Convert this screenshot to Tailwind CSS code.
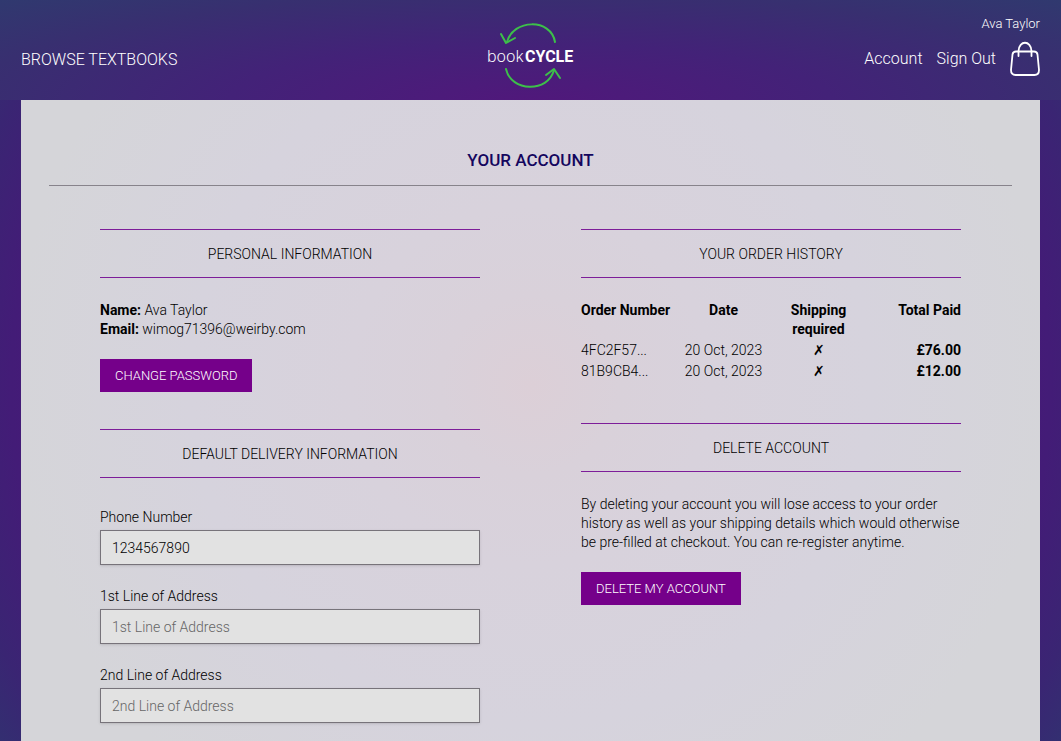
<!DOCTYPE html>
<html lang="en">
<head>
<meta charset="utf-8">
<meta name="viewport" content="width=device-width, initial-scale=1">
<title>Your Account – bookCYCLE</title>
<script src="https://cdn.jsdelivr.net/npm/@tailwindcss/browser@4"></script>
</head>
<body class="min-h-screen overflow-x-hidden bg-[radial-gradient(circle_at_50%_385px,#58107c_290px,#431c77_520px,#3a2573_590px,#303370_660px)] font-[Roboto,'Noto_Sans',sans-serif] text-sm leading-[19px] font-light text-black">
<header class="grid h-25 grid-cols-3 bg-[radial-gradient(ellipse_at_50%_100%,#50187b_0%,#432278_40%,#382f70_75%,#30396f_100%)] px-[21px] text-white">
  <nav class="flex items-center pt-5" aria-label="Browse">
    <a href="#" class="text-base">BROWSE TEXTBOOKS</a>
  </nav>
  <a href="#" class="flex justify-center pt-[21px]" aria-label="bookCYCLE home">
    <svg class="overflow-visible" width="88" height="68" viewBox="0 0 88 68" aria-hidden="true">
      <g fill="none" stroke="#3dc04a" stroke-width="2" stroke-linecap="round" stroke-linejoin="round">
        <path d="M21 21C27 -2 65 -3 69 21"/>
        <path d="M15 13L20 22L29 17"/>
        <path d="M20 48C25 71 62 72 68 49"/>
        <path d="M60 54L68 48L74 57"/>
      </g>
      <text x="1" y="41" font-family="Noto Sans" font-size="16" font-weight="300" fill="#fff">book</text>
      <text x="39" y="41" font-family="Roboto" font-size="16" font-weight="700" fill="#fff">CYCLE</text>
    </svg>
  </a>
  <div class="flex flex-col items-end pt-3.5">
    <span class="text-[13px] leading-[19px]">Ava Taylor</span>
    <nav class="mt-2 flex items-center gap-3.5 text-base" aria-label="Account">
      <a href="#">Account</a>
      <a href="#">Sign Out</a>
      <a href="#" aria-label="Shopping bag">
        <svg width="30" height="36" viewBox="0 0 30 36" fill="none" stroke="#fff" stroke-width="1.8" stroke-linecap="round" aria-hidden="true">
          <path d="M6 10.500H24Q27 10.500 27.500 13.500L29 29Q29 34 24.500 34H5.500Q1 34 1 29L2.500 13.500Q3 10.500 6 10.500Z"/>
          <path d="M8.500 15V10C9 -1 21 -1 21.500 10V15"/>
        </svg>
      </a>
    </nav>
  </div>
</header>
<main class="mx-[21px] min-h-[calc(100vh-100px)] bg-[radial-gradient(circle_at_50%_285px,#dccfd7_0px,#d9d1da_90px,#d8d2dc_180px,#d6d3dd_340px,#d5d5d9_520px)] px-7 pt-[49px] pb-3">
  <h1 class="border-b border-[#87838b] pb-3.5 text-center text-[17px] leading-[22px] font-medium text-[#14065e]">YOUR ACCOUNT</h1>
  <div class="mt-[43px] grid grid-cols-2 gap-[101px] px-[51px]">
    <div>
      <section>
        <h2 class="border-y border-[#7d1d99] pt-[15px] pb-[13px] text-center">PERSONAL INFORMATION</h2>
        <p class="mt-[23px]"><b class="font-bold">Name:</b> Ava Taylor</p>
        <p><b class="font-bold">Email:</b> wimog71396@weirby.com</p>
        <button class="mt-5 h-[33px] bg-[#75008a] px-[15px] text-[13px] text-white">CHANGE PASSWORD</button>
      </section>
      <section class="mt-[37px]">
        <h2 class="border-y border-[#7d1d99] pt-[15px] pb-[13px] text-center">DEFAULT DELIVERY INFORMATION</h2>
        <form class="mt-[30px] flex flex-col gap-[22px]">
          <div>
            <label for="phone" class="block">Phone Number</label>
            <input id="phone" type="tel" value="1234567890" class="mt-[3px] h-[35px] w-full border border-[#77737a] bg-[#e2e2e2] px-[11px] shadow-sm">
          </div>
          <div>
            <label for="line1" class="block">1st Line of Address</label>
            <input id="line1" placeholder="1st Line of Address" class="mt-[3px] h-[35px] w-full border border-[#77737a] bg-[#e2e2e2] px-[11px] shadow-sm placeholder:text-[#666]">
          </div>
          <div>
            <label for="line2" class="block">2nd Line of Address</label>
            <input id="line2" placeholder="2nd Line of Address" class="mt-[3px] h-[35px] w-full border border-[#77737a] bg-[#e2e2e2] px-[11px] shadow-sm placeholder:text-[#666]">
          </div>
        </form>
      </section>
    </div>
    <div>
      <section>
        <h2 class="border-y border-[#7d1d99] pt-[15px] pb-[13px] text-center">YOUR ORDER HISTORY</h2>
        <table class="mt-[23px] w-full table-fixed">
          <thead>
            <tr class="align-top font-bold">
              <th class="w-1/4 text-left whitespace-nowrap">Order Number</th>
              <th class="w-1/4">Date</th>
              <th class="w-1/4">Shipping<br>required</th>
              <th class="w-1/4 text-right">Total Paid</th>
            </tr>
          </thead>
          <tbody>
            <tr><td class="pt-0.5">4FC2F57...</td><td class="pt-0.5 text-center whitespace-nowrap">20 Oct, 2023</td><td class="pt-0.5 text-center">✗</td><td class="pt-0.5 text-right font-bold">£76.00</td></tr>
            <tr><td class="pt-0.5">81B9CB4...</td><td class="pt-0.5 text-center whitespace-nowrap">20 Oct, 2023</td><td class="pt-0.5 text-center">✗</td><td class="pt-0.5 text-right font-bold">£12.00</td></tr>
          </tbody>
        </table>
      </section>
      <section class="mt-[42px]">
        <h2 class="border-y border-[#7d1d99] pt-[15px] pb-[13px] text-center">DELETE ACCOUNT</h2>
        <p class="mt-[23px]">By deleting your account you will lose access to your order history as well as your shipping details which would otherwise be pre-filled at checkout. You can re-register anytime.</p>
        <button class="mt-5 h-[33px] bg-[#75008a] px-[15px] text-[13px] text-white">DELETE MY ACCOUNT</button>
      </section>
    </div>
  </div>
</main>
</body>
</html>
